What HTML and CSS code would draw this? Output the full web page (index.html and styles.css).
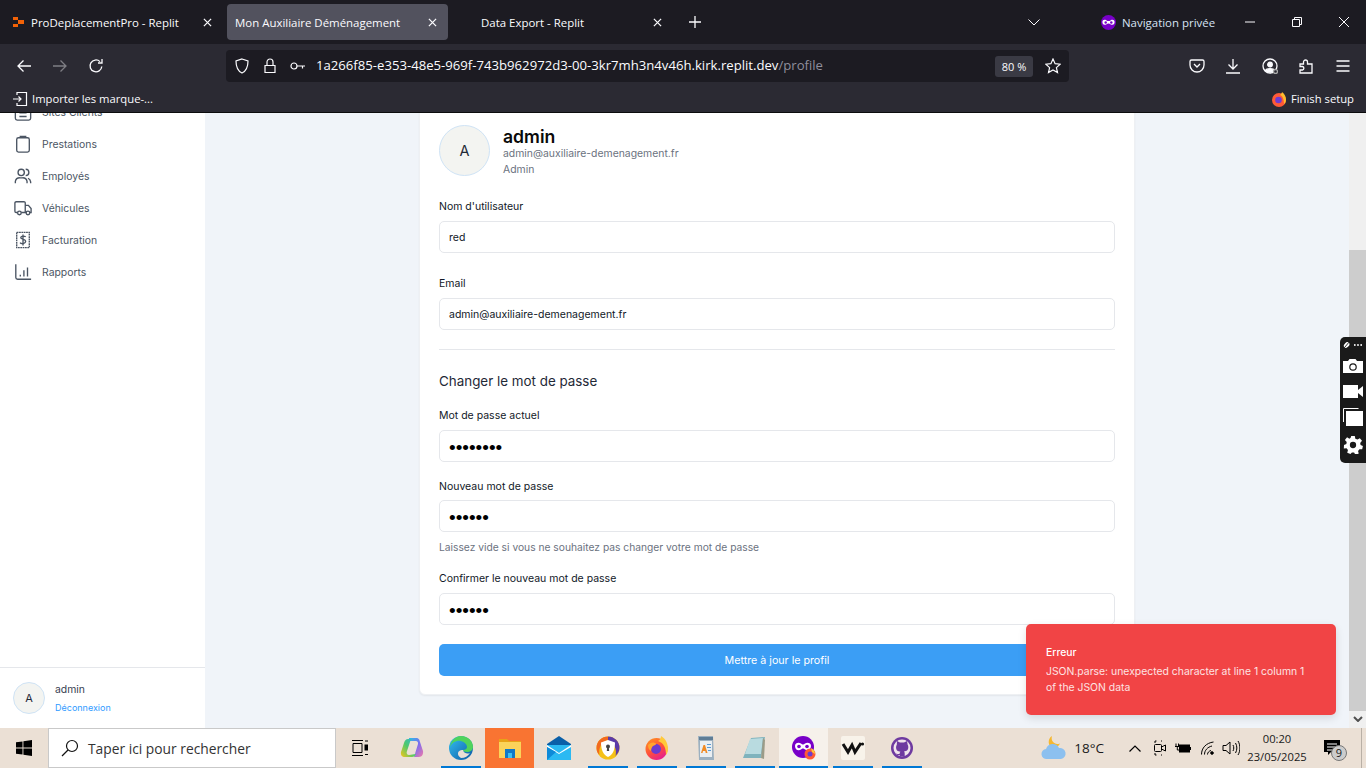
FILE: index.html
```html
<!DOCTYPE html>
<html lang="fr">
<head>
    <meta charset="UTF-8">
    <meta name="viewport" content="width=device-width, initial-scale=1.0">
    <title>Mon Auxiliaire Déménagement</title>
    <link rel="stylesheet" href="styles.css">
</head>
<body>
    <!-- Browser tabs -->
    <div class="tab-bar">
        <div class="tab tab-first">
            <svg class="favicon" viewBox="0 0 12 12"><path fill="#f26207" d="M0 1h5v3H0zM5 4h6v4H5zM0 8h5v3H0z"/></svg>
            <span class="tab-title">ProDeplacementPro - Replit</span>
            <svg class="tab-close" viewBox="0 0 10 10"><path d="M1 1l8 8M9 1L1 9"/></svg>
        </div>
        <div class="tab tab-active">
            <span class="tab-title">Mon Auxiliaire Déménagement</span>
            <svg class="tab-close" viewBox="0 0 10 10"><path d="M1 1l8 8M9 1L1 9"/></svg>
        </div>
        <div class="tab tab-third">
            <span class="tab-title">Data Export - Replit</span>
            <svg class="tab-close" viewBox="0 0 10 10"><path d="M1 1l8 8M9 1L1 9"/></svg>
        </div>
        <svg class="new-tab" viewBox="0 0 12 12"><path d="M6 0v12M0 6h12"/></svg>
        <svg class="tab-list" viewBox="0 0 12 7"><path d="M.5.5L6 6l5.500-5.500"/></svg>
        <div class="private">
            <svg class="private-icon" viewBox="0 0 16 16"><circle cx="8" cy="8" r="8" fill="#7800c8"/><path fill="#fff" d="M1.5 7.500c0-2.500 2.500-3 4-2 1 .6 1.800 1 2.500 1s1.500-.4 2.500-1c1.500-1 4-.5 4 2 0 3-2.500 3.500-4 2.500-1-.6-1.800-1-2.500-1s-1.500.4-2.500 1c-1.500 1-4 .5-4-2.500z"/><circle cx="5" cy="8" r="1.300" fill="#7800c8"/><circle cx="11" cy="8" r="1.300" fill="#7800c8"/></svg>
            <span>Navigation privée</span>
        </div>
        <div class="window-controls">
            <svg viewBox="0 0 10 10"><path d="M0 5h10"/></svg>
            <svg viewBox="0 0 10 10"><path d="M.5 2.500h7v7h-7zM2.500 2.500V.5h7v7h-2"/></svg>
            <svg viewBox="0 0 10 10"><path d="M0 0l10 10M10 0L0 10"/></svg>
        </div>
    </div>

    <!-- Navigation toolbar -->
    <div class="nav-bar">
        <div class="nav-buttons">
            <svg viewBox="0 0 16 16"><path d="M15 8H2M7.500 2.500L2 8l5.500 5.500"/></svg>
            <svg class="disabled" viewBox="0 0 16 16"><path d="M1 8h13M8.500 2.500L14 8l-5.500 5.500"/></svg>
            <svg viewBox="0 0 16 16"><path d="M13.800 8.500A5.900 5.900 0 1 1 12 3.600M14 1v4h-4"/></svg>
        </div>
        <div class="url-bar">
            <svg class="url-icon" viewBox="0 0 16 16"><path d="M8 1l6 2c0 6-1.500 10-6 12C3.500 13 2 9 2 3z"/></svg>
            <svg class="url-icon" viewBox="0 0 16 16"><path d="M3 7.500h10v7H3zM5 7.500V4a3 3 0 0 1 6 0v3.500"/></svg>
            <svg class="url-icon url-key" viewBox="0 0 16 16"><circle cx="4" cy="8" r="3"/><path d="M7 8h8M12.500 8v2.500"/></svg>
            <span class="url-text">1a266f85-e353-48e5-969f-743b962972d3-00-3kr7mh3n4v46h.kirk.replit.dev<span class="url-path">/profile</span></span>
            <span class="zoom-level">80 %</span>
            <svg class="url-star" viewBox="0 0 16 16"><path d="M8 1l2.100 4.700 5.100.5-3.800 3.400 1.100 5L8 12l-4.500 2.600 1.100-5L.8 6.200l5.100-.5z"/></svg>
        </div>
        <div class="toolbar-icons">
            <svg viewBox="0 0 16 16"><path d="M2.500 2h11A1.500 1.500 0 0 1 15 3.500V7a7 7 0 0 1-14 0V3.500A1.500 1.500 0 0 1 2.500 2zM5 6l3 3 3-3"/></svg>
            <svg viewBox="0 0 16 16"><path d="M8 1v10M3.500 6.500L8 11l4.500-4.500M1 15h14"/></svg>
            <svg viewBox="0 0 16 16"><circle cx="8" cy="8" r="7"/><circle cx="8" cy="6.500" r="2.300" fill="#fbfbfe"/><path fill="#fbfbfe" d="M3.500 12.500c1-2.500 8-2.500 9 0-2 2-7 2-9 0z"/><circle cx="13.500" cy="13.500" r="2" class="badge-dot"/></svg>
            <svg viewBox="0 0 16 16"><path d="M2 6h3.500V4a2 2 0 0 1 4 0v2H14v9H2v-3h2.500a1.800 1.800 0 0 0 0-3.500H2z"/></svg>
            <svg viewBox="0 0 16 16"><path d="M1.500 3h13M1.500 8h13M1.500 13h13"/></svg>
        </div>
    </div>

    <!-- Bookmarks toolbar -->
    <div class="bookmarks-bar">
        <div class="bookmark">
            <svg viewBox="0 0 16 16"><path d="M5 4V1.500h9.500v13H5V12M1 8h8M6.500 5.500L9 8l-2.500 2.500"/></svg>
            <span>Importer les marque-...</span>
        </div>
        <div class="bookmark">
            <svg class="ff-small" viewBox="0 0 16 16"><circle cx="8" cy="9" r="7" fill="#ff5a36"/><path fill="#ffbd2e" d="M11 1c3 2 4 5 4 8 0 2-1 3-2 4 0-4-1-8-4-9 1-1 2-2 2-3z"/><circle cx="7.500" cy="9" r="3.300" fill="#6f3bd0"/></svg>
            <span>Finish setup</span>
        </div>
    </div>

    <!-- Page -->
    <div class="viewport">
        <aside class="sidebar">
            <nav class="side-nav">
                <a class="side-link">
                    <svg viewBox="0 0 20 20"><rect x="1.500" y="1" width="17" height="18" rx="2"/><path d="M6 7h8M6 11h8M6 15h8"/></svg>
                    <span>Sites Clients</span>
                </a>
                <a class="side-link">
                    <svg viewBox="0 0 20 20"><rect x="3" y="3" width="14" height="16" rx="2"/><path d="M7 3V1.500h6V3"/></svg>
                    <span>Prestations</span>
                </a>
                <a class="side-link">
                    <svg viewBox="0 0 20 20"><circle cx="8" cy="6" r="3.500"/><path d="M1.500 18v-2a5 5 0 0 1 5-4h3a5 5 0 0 1 5 4v2M13 2.500a3.500 3.500 0 0 1 0 7M15.500 12.500a5 5 0 0 1 3 4V18"/></svg>
                    <span>Employés</span>
                </a>
                <a class="side-link">
                    <svg viewBox="0 0 20 20"><path d="M4 15H2.500a1.500 1.500 0 0 1-1.500-1.500v-9A1.500 1.500 0 0 1 2.500 3H11a1.500 1.500 0 0 1 1.500 1.500V15H8M12.500 7H16l3 3.500V15h-1.500M13 15h.5"/><circle cx="6" cy="15.500" r="2"/><circle cx="15.500" cy="15.500" r="2"/></svg>
                    <span>Véhicules</span>
                </a>
                <a class="side-link">
                    <svg viewBox="0 0 20 20"><path d="M3 1.500h14v17H3z" stroke-dasharray="2 .6"/><path d="M13 6.500c-1-1-5-1.500-5.500.5S13 9 13 11.500 8 15 6.800 13M10 4v12"/></svg>
                    <span>Facturation</span>
                </a>
                <a class="side-link">
                    <svg viewBox="0 0 20 20"><path d="M2 1.500V16a2 2 0 0 0 2 2h15M7 13v2M11 8v7M15 5v10"/></svg>
                    <span>Rapports</span>
                </a>
            </nav>
            <div class="side-user">
                <div class="avatar avatar-small">A</div>
                <div class="side-user-text">
                    <div class="side-user-name">admin</div>
                    <a class="logout">Déconnexion</a>
                </div>
            </div>
        </aside>

        <main class="main">
            <div class="card">
                <div class="profile-head">
                    <div class="avatar avatar-large">A</div>
                    <div>
                        <div class="profile-name">admin</div>
                        <div class="profile-meta">admin@auxiliaire-demenagement.fr</div>
                        <div class="profile-meta">Admin</div>
                    </div>
                </div>

                <div class="field field-name">
                    <label>Nom d'utilisateur</label>
                    <div class="input">red</div>
                </div>
                <div class="field field-email">
                    <label>Email</label>
                    <div class="input">admin@auxiliaire-demenagement.fr</div>
                </div>

                <hr class="divider">
                <h3 class="section-title">Changer le mot de passe</h3>

                <div class="field field-current">
                    <label>Mot de passe actuel</label>
                    <div class="input input-password">••••••••</div>
                </div>
                <div class="field field-new">
                    <label>Nouveau mot de passe</label>
                    <div class="input input-password">••••••</div>
                    <p class="hint">Laissez vide si vous ne souhaitez pas changer votre mot de passe</p>
                </div>
                <div class="field field-confirm">
                    <label>Confirmer le nouveau mot de passe</label>
                    <div class="input input-password">••••••</div>
                </div>
                <button class="submit">Mettre à jour le profil</button>
            </div>
        </main>

        <div class="scrollbar">
            <div class="scroll-track"></div>
            <div class="scroll-thumb"></div>
            <svg class="scroll-arrow" viewBox="0 0 10 6"><path d="M1 1l4 4 4-4"/></svg>
        </div>

        <div class="toast">
            <div class="toast-title">Erreur</div>
            <div class="toast-text">JSON.parse: unexpected character at line 1 column 1 of the JSON data</div>
        </div>

        <div class="capture-widget">
            <svg class="capture-top" viewBox="0 0 22 8"><ellipse cx="4" cy="4" rx="3.500" ry="2.500" fill="#fff" transform="rotate(-45 4 4)"/><path d="M6.500 1L1.500 7" stroke="#1a1a1a"/><circle cx="13" cy="4" r="1" fill="#fff"/><circle cx="16.500" cy="4" r="1" fill="#fff"/><circle cx="20" cy="4" r="1" fill="#fff"/></svg>
            <svg class="capture-camera" viewBox="0 0 20 14"><path fill="#fff" d="M0 2h5l1.500-2h6L14 2h6v12H0z"/><circle cx="10" cy="8" r="3.800" fill="#1a1a1a"/><circle cx="10" cy="8" r="2.600" fill="#fff"/></svg>
            <svg class="capture-video" viewBox="0 0 20 13"><path fill="#fff" d="M0 0h15v13H0zM15 5l5-4v11l-5-4z"/></svg>
            <svg class="capture-copies" viewBox="0 0 20 18"><path fill="none" stroke="#fff" d="M.5 14V.5h15"/><path fill="#fff" d="M3 3h17v15H3z"/></svg>
            <svg class="capture-gear" viewBox="0 0 20 20"><path fill="#fff" fill-rule="evenodd" d="M8 0h4l.6 3 2.400 1 2.600-1.600 2.400 3-2 2.300.4 2.300 2.600 1-.8 3.800-3-.2-1.600 2 .8 2.900-3.600 1.500-1.600-2.600h-2.400L7.200 20l-3.600-1.500.8-2.900-1.600-2-3 .2L0 10l2.600-1 .4-2.300-2-2.300 2.400-3L6 3 7.400 2zM10 6.500a3.500 3.500 0 1 0 0 7 3.500 3.500 0 0 0 0-7z"/></svg>
        </div>
    </div>

    <!-- Windows taskbar -->
    <footer class="taskbar">
        <svg class="start" viewBox="0 0 16 16"><path fill="#000" d="M0 2.300L6.500 1.400V7.500H0zM7.400 1.300L16 0v7.500H7.400zM0 8.500h6.500v6.100L0 13.700zM7.400 8.500H16V16l-8.600-1.300z"/></svg>
        <div class="search-box">
            <svg viewBox="0 0 18 18"><circle cx="11" cy="7" r="5.500"/><path d="M7 11l-6 6"/></svg>
            <span>Taper ici pour rechercher</span>
        </div>
        <svg class="task-view" viewBox="0 0 16 16"><path d="M0 .5h11M0 15.500h11M1 3.500h9v9H1zM13 1h3M13 14.500h3"/><rect x="13" y="5" width="3" height="5" fill="#000"/></svg>

        <div class="task-apps">
            <div class="app">
                <svg viewBox="0 0 24 24"><defs><linearGradient id="cop" x1="0" y1="0" x2="1" y2="1"><stop offset="0" stop-color="#2cc0e8"/><stop offset=".5" stop-color="#7c6cf0"/><stop offset="1" stop-color="#f27aa8"/></linearGradient><linearGradient id="cop2" x1="0" y1="1" x2="1" y2="0"><stop offset="0" stop-color="#f5c518"/><stop offset=".5" stop-color="#4ec96b"/><stop offset="1" stop-color="#2cb4ea"/></linearGradient></defs><path fill="url(#cop)" d="M9 2h7c3 0 3.500 2 4 4l3 9c.5 3-1 6-4 6h-5l4-13c.5-2-1-3-2-3H9z"/><path fill="url(#cop2)" d="M8 3c-2 0-3 1-4 4L1 16c-.5 3 1 5 4 5h7c2 0 3-1 4-3l-7 1c-2 0-3-2-2-4l3-9c.5-2 1-3 3-3z"/></svg>
            </div>
            <div class="app app-open">
                <svg viewBox="0 0 24 24"><defs><linearGradient id="edge" x1="0" y1="0" x2="1" y2="1"><stop offset="0" stop-color="#35c1f1"/><stop offset="1" stop-color="#0c59a4"/></linearGradient></defs><circle cx="12" cy="12" r="12" fill="url(#edge)"/><path fill="#4fd35c" d="M12 0c7 0 12 5 12 11 0 3-3 5-6 5-2 0-4-1-4-2 2 0 4-1 4-3 0-4-6-7-10-6-3 .6-6 3-7 6C2 5 6 0 12 0z"/><path fill="#eadfd5" d="M14 14c-3 0-5 1-5 4 0 1 1 3 3 4 4 0 7-2 9-5-2 1-6 1-7-3z"/></svg>
            </div>
            <div class="app app-active">
                <svg viewBox="0 0 24 24"><path fill="#e8a317" d="M1 3h8l2 2h12v4H1z"/><path fill="#fbd35a" d="M1 6h22v16H1z"/><path fill="#0f78c8" d="M7 13h10v9h-3v-5h-4v5H7z"/><path fill="#3ec0f0" d="M10 17h4v5h-4z"/></svg>
            </div>
            <div class="app">
                <svg viewBox="0 0 24 24"><path fill="#0a5fa8" d="M12 0l12 8v2H0V8z"/><path fill="#2bb9f2" d="M0 9h24v15H0z"/><path fill="#fff" d="M0 9l12 8 12-8v2L12 18 0 11z"/><path fill="#0f8ad8" d="M0 24V11l9 5z"/></svg>
            </div>
            <div class="app app-open">
                <svg viewBox="0 0 24 24"><circle cx="12" cy="12" r="11.500" fill="#f5c116"/><path fill="#5b3aa8" d="M12 .5a11.500 11.500 0 0 1 11.500 11.500c0 3-2 6-4 8 1-3 1-13-7.500-15z"/><path fill="#f26a1f" d="M12 .5C6 .5.500 5 .5 12c0 3 1 5 3 7C2 12 6 5 12 4z"/><path fill="#fff" d="M12 4l7 2.500c0 7-2 12-7 14.500-5-2.500-7-7.500-7-14.500z"/><circle cx="12" cy="10.500" r="2" fill="#444"/><path fill="#444" d="M11.200 11h1.600l.4 4h-2.400z"/></svg>
            </div>
            <div class="app app-open">
                <svg viewBox="0 0 24 24"><defs><linearGradient id="fox" x1="0" y1="0" x2=".6" y2="1"><stop offset="0" stop-color="#ff9a1f"/><stop offset=".6" stop-color="#ff4f3a"/><stop offset="1" stop-color="#e6218c"/></linearGradient></defs><circle cx="11.500" cy="13" r="11" fill="url(#fox)"/><path fill="#ffc93a" d="M16 0c5 3 7 8 7 13 0 2-.5 4-2 6 0-7-2-12-8-14 2-1 3-3 3-5z"/><circle cx="11" cy="13" r="5" fill="#6a3cd0"/><path fill="#ffa52e" d="M3 9c2-2 4-3 7-2 2 .5 1 2-1 2.500C7 10 6 13 6 15c-2-1-3-3-3-6z"/></svg>
            </div>
            <div class="app app-open">
                <svg viewBox="0 0 24 24"><path fill="#9cb0c0" d="M4 0h15l1 24H5z"/><path fill="#e9eef2" d="M6 5h12v16H6z"/><path fill="#5f7d96" d="M5 1h14v3H5z"/><path fill="#f08a24" d="M7 17l2.500-8h1.500l2.500 8h-1.800l-.4-2H9l-.5 2z"/><path fill="#5b9bd5" d="M13 8h4v1h-4zM13 11h4v1h-4zM14 14h3v1h-3z"/></svg>
            </div>
            <div class="app app-open">
                <svg viewBox="0 0 24 24"><path fill="#7fb3bd" d="M8 2l14-1-4 21H0z"/><path fill="#b9dbe0" d="M7 3l13-1-2 16H2z"/><path fill="#9b9b88" d="M20 2l2 2-1 19-3-1z"/></svg>
            </div>
            <div class="app app-open app-hover">
                <svg viewBox="0 0 24 24"><circle cx="11" cy="11" r="11" fill="#7800c8"/><path fill="#fff" d="M3 10c0-3 3.500-4 6-2.500 1 .6 1.500 1 2 1s1-.4 2-1C15.500 6 19 7 19 10c0 4-3.500 5-6 3.500-1-.6-1.500-1-2-1s-1 .4-2 1C6.500 15 3 14 3 10z"/><circle cx="7" cy="10.500" r="1.800" fill="#7800c8"/><circle cx="15" cy="10.500" r="1.800" fill="#7800c8"/><circle cx="18" cy="18" r="5.500" fill="#ff5a36"/><circle cx="18" cy="18" r="2.500" fill="#6a3cd0"/><path fill="#ffc93a" d="M19 12c2 1 4 3 4 6l-3-2z"/></svg>
            </div>
            <div class="app app-open">
                <svg viewBox="0 0 24 24"><rect width="24" height="24" rx="2" fill="#f8f3ea"/><path fill="none" stroke="#111" stroke-width="3" d="M2 8l5 8 4-7 3 7 6-9"/><circle cx="21.500" cy="8" r="1.600" fill="#111"/></svg>
            </div>
            <div class="app app-open">
                <svg viewBox="0 0 24 24"><circle cx="12" cy="12" r="11" fill="#6e3aa0"/><circle cx="12" cy="12" r="8.500" fill="#f0e4ec"/><path fill="#6e3aa0" d="M7 5l3 1.500h4L17 5l.6 3.500c1 1.500 1 4-.1 5.500-1 1-2.500 1.300-3.500 1.500.5.500.7 1 .7 2v3h-5v-1.500c-2 .5-3-.2-3.700-1.700.6.300 1.700 1.200 3.700.4 0-1 .2-1.500.7-2-1-.2-2.500-.5-3.500-1.500-1.100-1.500-1.100-4-.1-5.500z"/></svg>
            </div>
        </div>

        <div class="tray">
            <svg class="weather" viewBox="0 0 26 24"><path fill="#f5b72e" d="M11 0c-1 3 0 7 5 8 1 0 2 0 3-.5C18 10 15 12 12 11.500 7 11 6 3 11 0z"/><path fill="#8cc0ef" d="M6 23a5 5 0 0 1-1-10 7 7 0 0 1 13-1 5.500 5.500 0 0 1 2 11z"/></svg>
            <span class="temp">18°C</span>
            <svg class="tray-icon tray-chevron" viewBox="0 0 12 7"><path d="M.5 6.500L6 1l5.500 5.500"/></svg>
            <svg class="tray-icon tray-meet" viewBox="0 0 12 16"><path d="M2.500 1H1v2M2.500 15H1v-2M7 1h1M7 15h1"/><rect x=".5" y="4.500" width="7" height="7" rx="1"/><path d="M7.500 7L11.500 5v6L7.500 9z"/></svg>
            <svg class="tray-icon tray-battery" viewBox="0 0 16 11"><path d="M1 .5v3M3.500 .5v3M0 3.500h4.500M2.300 3.500V7h2"/><rect x="4.500" y="2" width="10" height="7" fill="#000"/><path d="M15.500 4v3"/></svg>
            <svg class="tray-icon tray-wifi" viewBox="0 0 14 14"><path d="M.5 13.500C.5 7 5 2 12.500 1M3.500 13.500c0-4 3-7.500 7.500-8.500M6.500 13.500c0-2 1.500-3.500 3.500-4"/><circle cx="11" cy="12" r="1.300" fill="#000"/></svg>
            <svg class="tray-icon tray-sound" viewBox="0 0 18 16"><path d="M1 5.500h3L8 2v12l-4-3.500H1zM11 5c1 2 1 4 0 6M13.500 3c1.800 3 1.800 7 0 10M16 1c2.500 4 2.500 10 0 14"/></svg>
            <div class="clock">
                <div>00:20</div>
                <div>23/05/2025</div>
            </div>
            <div class="notif">
                <svg viewBox="0 0 16 16"><path fill="#000" d="M0 0h16v12H7l-3 3v-3H0z"/><path stroke="#fff" d="M3 4h10M3 7h10M3 10h6"/></svg>
                <span class="notif-count">9</span>
            </div>
            <div class="show-desktop"></div>
        </div>
    </footer>
</body>
</html>
```

FILE: styles.css
```css
* {
    box-sizing: border-box;
}
html, body {
    margin: 0;
    height: 768px;
    overflow: hidden;
}
body {
    display: flex;
    flex-direction: column;
    font-family: Inter, "Noto Sans", sans-serif;
    background-color: #f0f4f9;
}
svg {
    display: block;
    flex: none;
}

/* Tabs */
.tab-bar {
    display: flex;
    align-items: center;
    height: 44px;
    background-color: #1c1b22;
    color: #fbfbfe;
    font-family: "Open Sans", sans-serif;
    font-size: 11.45px;
}
.tab {
    display: flex;
    align-items: center;
    height: 36px;
    border-radius: 4px;
}
.tab-first {
    width: 222px;
    padding: 0 10px 0 13px;
    margin-right: 5px;
}
.tab-active {
    width: 221px;
    padding: 0 11px 0 8px;
    margin-right: 5px;
    background-color: #52525e;
}
.tab-third {
    width: 217px;
    padding: 0 8px 0 28px;
}
.favicon {
    width: 12px;
    height: 12px;
    margin-right: 6px;
}
.tab-title {
    flex: 1;
    padding-top: 1px;
    white-space: nowrap;
}
.tab-close {
    width: 9px;
    height: 9px;
    fill: none;
    stroke: #fbfbfe;
    stroke-width: 1.4;
}
.new-tab {
    width: 12px;
    height: 12px;
    margin-left: 19px;
    fill: none;
    stroke: #fbfbfe;
    stroke-width: 1.3;
}
.tab-list {
    width: 12px;
    height: 7px;
    margin-left: 327px;
    fill: none;
    stroke: #fbfbfe;
}
.private {
    display: flex;
    align-items: center;
    gap: 6px;
    width: 144px;
    margin-left: 61px;
    color: #d7e3f4;
}
.private-icon {
    width: 15px;
    height: 15px;
}
.window-controls {
    display: flex;
    align-items: center;
    gap: 37px;
}
.window-controls svg {
    width: 10px;
    height: 10px;
    fill: none;
    stroke: #fbfbfe;
}

/* Toolbar */
.nav-bar {
    display: flex;
    align-items: center;
    height: 44px;
    background-color: #2b2a33;
}
.nav-buttons {
    display: flex;
    gap: 20px;
    width: 226px;
    padding-left: 16px;
}
.nav-buttons svg, .toolbar-icons svg {
    width: 16px;
    height: 16px;
    fill: none;
    stroke: #fbfbfe;
    stroke-width: 1.3;
}
.nav-buttons .disabled {
    opacity: .4;
}
.url-bar {
    display: flex;
    align-items: center;
    width: 843px;
    height: 32px;
    padding: 0 8px;
    background-color: #1c1b22;
    border-radius: 4px;
    color: #fbfbfe;
    font-family: "Open Sans", sans-serif;
    font-size: 13.15px;
}
.url-icon {
    width: 16px;
    height: 16px;
    margin-right: 12px;
    fill: none;
    stroke: #fbfbfe;
    stroke-width: 1.2;
}
.url-key {
    margin-right: 10px;
}
.url-text {
    flex: 1;
    padding-bottom: 2px;
    white-space: nowrap;
}
.url-path {
    color: #8f8f9d;
}
.zoom-level {
    width: 38px;
    height: 21px;
    margin-right: 12px;
    background-color: #3a3a44;
    border-radius: 3px;
    font-size: 11px;
    line-height: 21px;
    text-align: center;
}
.url-star {
    width: 16px;
    height: 16px;
    fill: none;
    stroke: #fbfbfe;
    stroke-width: 1.2;
}
.toolbar-icons {
    display: flex;
    gap: 20.4px;
    margin-left: 120px;
}
.badge-dot {
    fill: #2b2a33;
    stroke: #aaa;
}

/* Bookmarks */
.bookmarks-bar {
    display: flex;
    align-items: center;
    justify-content: space-between;
    height: 25px;
    padding: 0 12px 3px;
    background-color: #2b2a33;
    border-bottom: 1px solid #0c0c0d;
    color: #fbfbfe;
    font-family: "Open Sans", sans-serif;
    font-size: 11.25px;
}
.bookmark {
    display: flex;
    align-items: center;
    gap: 4px;
}
.bookmark svg {
    width: 16px;
    height: 16px;
    fill: none;
    stroke: #fbfbfe;
    stroke-width: 1.2;
}
.bookmark .ff-small {
    stroke: none;
}

/* Page */
.viewport {
    position: relative;
    display: flex;
    height: 615px;
    overflow: hidden;
}
.sidebar {
    display: flex;
    flex-direction: column;
    justify-content: space-between;
    width: 205px;
    height: 615px;
    background-color: #fff;
}
.side-nav {
    display: flex;
    flex-direction: column;
    margin-top: -17px;
}
.side-link {
    display: flex;
    align-items: center;
    gap: 10px;
    height: 32px;
    padding-left: 14px;
    color: #4b5563;
    font-size: 10.4px;
}
.side-link svg {
    width: 18px;
    height: 18px;
    fill: none;
    stroke: #4b5563;
    stroke-width: 1.5;
}
.side-user {
    display: flex;
    align-items: center;
    gap: 10px;
    height: 61px;
    padding: 0 13px;
    border-top: 1px solid #e5e7eb;
}
.side-user-text {
    padding-top: 2px;
}
.avatar {
    display: flex;
    align-items: center;
    justify-content: center;
    flex: none;
    border-radius: 50%;
    background-color: #f3f4f1;
    border: 1px solid #cfe3f5;
    color: #1f2937;
}
.avatar-small {
    width: 32px;
    height: 32px;
    font-size: 11px;
}
.avatar-large {
    width: 51px;
    height: 51px;
    font-size: 14.5px;
}
.side-user-name {
    margin-bottom: 4px;
    color: #374151;
    font-size: 10.4px;
    line-height: 14px;
}
.logout {
    display: block;
    color: #2f9bff;
    font-size: 9px;
    line-height: 14px;
}

.main {
    flex: 1;
    display: flex;
    justify-content: center;
}
.card {
    width: 716px;
    height: 590px;
    margin-top: -8px;
    padding: 20px 19px;
    background-color: #fff;
    border: 1px solid #eef0f3;
    border-radius: 6px;
    box-shadow: 0 1px 2px rgba(0, 0, 0, .06);
}
.profile-head {
    display: flex;
    align-items: flex-start;
    gap: 13px;
    height: 64px;
    margin-top: -1px;
}
.profile-name {
    margin: 2px 0 -1px;
    color: #0a0a0a;
    font-size: 17.6px;
    font-weight: 600;
    line-height: 20px;
}
.profile-meta {
    color: #6b7280;
    font-size: 10.4px;
    line-height: 16px;
}
.field label {
    display: block;
    height: 16px;
    color: #111827;
    font-size: 10.5px;
    line-height: 16px;
}
.field-name {
    margin-top: 10px;
}
.field-email {
    margin-top: 23px;
}
.field-current {
    margin-top: 18px;
}
.field-new {
    margin-top: 17px;
}
.field-confirm {
    margin-top: 17px;
}
.input {
    height: 32px;
    margin-top: 6px;
    padding-left: 9px;
    background-color: #fff;
    border: 1px solid #e5e7eb;
    border-radius: 5px;
    color: #111827;
    font-size: 10.5px;
    line-height: 32px;
}
.input-password {
    color: #000;
    font-family: "Liberation Sans", sans-serif;
    font-size: 19px;
    line-height: 34px;
    overflow: hidden;
}
.field-new .input {
    margin-top: 5px;
}
.hint {
    margin: 8px 0 0;
    color: #6b7280;
    font-size: 10.25px;
    line-height: 14px;
}
.divider {
    height: 1px;
    margin: 19px 0 0;
    border: 0;
    background-color: #e5e7eb;
}
.section-title {
    margin: 22px 0 0;
    color: #1f2937;
    font-size: 13.4px;
    font-weight: 400;
    line-height: 18px;
}
.submit {
    display: block;
    width: 100%;
    height: 32px;
    margin-top: 19px;
    background-color: #3b9ef5;
    border: none;
    border-radius: 5px;
    color: #fff;
    font-family: inherit;
    font-size: 10.7px;
}

/* Scrollbar */
.scrollbar {
    display: flex;
    flex-direction: column;
    align-items: center;
    width: 17px;
    height: 615px;
    background-color: #f0f0f0;
}
.scroll-track {
    height: 137px;
}
.scroll-thumb {
    width: 17px;
    height: 461px;
    background-color: #cdcdcd;
}
.scroll-arrow {
    width: 10px;
    height: 6px;
    margin-top: 5px;
    fill: none;
    stroke: #505050;
    stroke-width: 2;
}

/* Overlays */
.toast {
    position: absolute;
    left: 1026px;
    top: 511px;
    width: 310px;
    height: 91px;
    padding: 21px 20px;
    background-color: #f14445;
    border-radius: 5px;
    box-shadow: 0 3px 8px rgba(0, 0, 0, .12);
    color: #fff;
    font-size: 10.4px;
    line-height: 16px;
}
.toast-title {
    margin-bottom: 3px;
    font-weight: 500;
}
.toast-text {
    color: #fde3e3;
}
.capture-widget {
    position: absolute;
    left: 1340px;
    top: 224px;
    display: flex;
    flex-direction: column;
    align-items: center;
    gap: 10px;
    width: 26px;
    height: 126px;
    padding-top: 4px;
    background-color: #1a1a1a;
    border-radius: 5px 0 0 5px;
}
.capture-widget svg {
    width: 20px;
}
.capture-widget .capture-top {
    height: 8px;
}
.capture-widget .capture-camera {
    height: 14px;
}
.capture-widget .capture-video {
    height: 13px;
    margin-top: 2px;
}
.capture-widget .capture-copies,
.capture-widget .capture-gear {
    height: 18px;
}

/* Taskbar */
.taskbar {
    display: flex;
    align-items: center;
    height: 40px;
    background-color: #ebe0d5;
    color: #1a1a1a;
    font-family: "Open Sans", sans-serif;
}
.start {
    width: 16px;
    height: 16px;
    margin-left: 16px;
}
.search-box {
    display: flex;
    align-items: center;
    gap: 9px;
    width: 288px;
    height: 40px;
    margin-left: 16px;
    padding-left: 12px;
    background-color: #fff;
    border: 1px solid #c9c9c9;
    font-size: 13.8px;
    color: #333;
}
.search-box svg {
    width: 18px;
    height: 18px;
    fill: none;
    stroke: #111;
    stroke-width: 1.2;
}
.task-view {
    width: 16px;
    height: 16px;
    margin-left: 16px;
    fill: none;
    stroke: #000;
}
.task-apps {
    display: flex;
    margin-left: 19px;
}
.app {
    display: flex;
    align-items: center;
    justify-content: center;
    width: 49px;
    height: 40px;
}
.app svg {
    width: 24px;
    height: 24px;
}
.app-open {
    background: linear-gradient(#0078d4, #0078d4) center bottom / 40px 2px no-repeat;
}
.app-active {
    background-color: #f97432;
}
.app-hover {
    background: linear-gradient(#0078d4, #0078d4) center bottom / 49px 2px no-repeat, #f6f1eb;
}
.tray {
    display: flex;
    align-items: center;
    margin-left: auto;
    height: 40px;
}
.weather {
    width: 26px;
    height: 24px;
}
.temp {
    margin-left: 7px;
    font-size: 13.5px;
}
.tray-icon {
    fill: none;
    stroke: #000;
}
.tray-chevron {
    width: 12px;
    height: 7px;
    margin-left: 25px;
    stroke-width: 1.2;
}
.tray-meet {
    width: 12px;
    height: 16px;
    margin-left: 13px;
}
.tray-battery {
    width: 16px;
    height: 11px;
    margin-left: 9px;
}
.tray-wifi {
    width: 14px;
    height: 14px;
    margin-left: 10px;
}
.tray-sound {
    width: 18px;
    height: 16px;
    margin-left: 7px;
}
.clock {
    width: 66px;
    margin-left: 4px;
    font-size: 11.2px;
    line-height: 18px;
    text-align: center;
}
.notif {
    position: relative;
    width: 16px;
    height: 16px;
    margin-left: 14px;
}
.notif svg {
    width: 16px;
    height: 16px;
}
.notif-count {
    position: absolute;
    left: 7px;
    top: 5px;
    width: 16px;
    height: 16px;
    background-color: #ccc;
    border: 1px solid #777;
    border-radius: 50%;
    font-size: 11px;
    line-height: 14px;
    text-align: center;
}
.show-desktop {
    width: 1px;
    height: 40px;
    margin-left: 21px;
    margin-right: 4px;
    background-color: #b9b0a6;
}
```
